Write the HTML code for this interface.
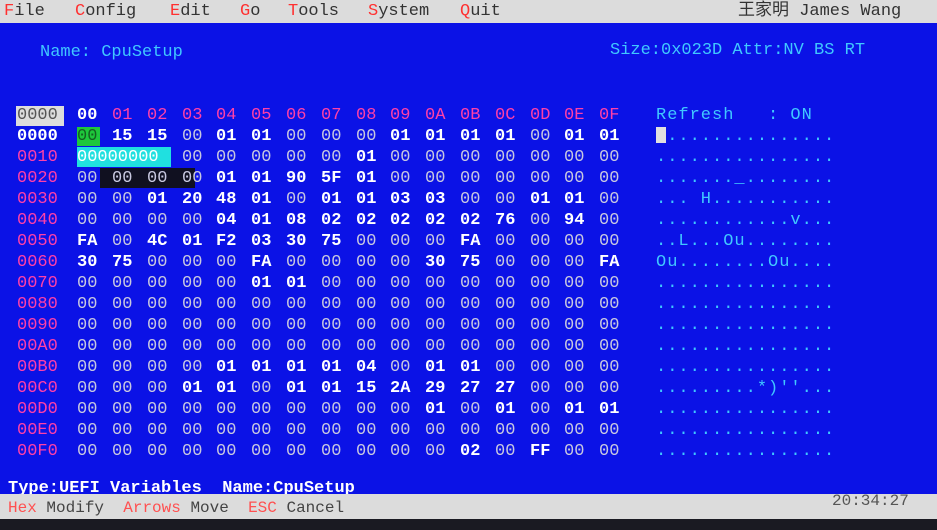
<!DOCTYPE html>
<html><head><meta charset="utf-8"><style>
body{margin:0;width:937px;height:530px;background:#1a1a22;overflow:hidden;position:relative;font-family:"Liberation Mono","DejaVu Sans Mono",monospace}
#menu{position:absolute;left:0;top:0;width:937px;height:23px;background:#dcdcdc;color:#333;font-size:17px;line-height:23px}
#menu span.r{color:#ff3030}
#blue{position:absolute;left:0;top:23px;width:937px;height:471px;background:#0b12e6}
.c{color:#40c8ff}
.row{position:absolute;left:0;height:21px;line-height:21px;font-size:17px;white-space:pre}
.row span{position:absolute;top:0}
.row span.a{letter-spacing:1px}
.w{color:#fff;font-weight:bold}
.g{color:#c8c8e0}
.m{color:#ff40a8}
.row span:nth-child(2){left:77px}.row span:nth-child(3){left:112px}.row span:nth-child(4){left:147px}.row span:nth-child(5){left:182px}.row span:nth-child(6){left:216px}.row span:nth-child(7){left:251px}.row span:nth-child(8){left:286px}.row span:nth-child(9){left:321px}.row span:nth-child(10){left:356px}.row span:nth-child(11){left:390px}.row span:nth-child(12){left:425px}.row span:nth-child(13){left:460px}.row span:nth-child(14){left:495px}.row span:nth-child(15){left:530px}.row span:nth-child(16){left:564px}.row span:nth-child(17){left:599px}
.row span:first-child{left:17px}
.row span.a{left:656px}
#bot{position:absolute;left:0;top:494px;width:937px;height:25px;background:#dcdcdc;color:#444;font-size:16px;line-height:25px;white-space:pre}
</style></head><body>
<div id="menu"><span style="position:absolute;left:4px"><span class="r">F</span>ile</span><span style="position:absolute;left:75px"><span class="r">C</span>onfig</span><span style="position:absolute;left:170px"><span class="r">E</span>dit</span><span style="position:absolute;left:240px"><span class="r">G</span>o</span><span style="position:absolute;left:288px"><span class="r">T</span>ools</span><span style="position:absolute;left:368px"><span class="r">S</span>ystem</span><span style="position:absolute;left:460px"><span class="r">Q</span>uit</span><span style="position:absolute;left:738px;font-family:'Liberation Mono','Noto Sans CJK SC',monospace">王家明 James Wang</span></div>
<div id="blue"></div>
<div class="c" style="position:absolute;font-size:17px;top:43px;left:40px">Name: CpuSetup</div>
<div class="c" style="position:absolute;font-size:17px;top:41px;left:610px">Size:0x023D Attr:NV BS RT</div>
<div style="position:absolute;left:16px;top:106px;width:48px;height:20px;background:#dcdcdc"></div>
<div style="position:absolute;left:77px;top:127px;width:23px;height:19px;background:#1ec83c"></div>
<div style="position:absolute;left:77px;top:147px;width:94px;height:20px;background:#20e0e0"></div>
<div style="position:absolute;left:100px;top:168px;width:95px;height:20px;background:#101020"></div>
<div style="position:absolute;left:656px;top:127px;width:10px;height:16px;background:#e0e0e0"></div>
<div class="row" style="top:105px"><span style="color:#555">0000</span><span class="w">00</span><span class="m">01</span><span class="m">02</span><span class="m">03</span><span class="m">04</span><span class="m">05</span><span class="m">06</span><span class="m">07</span><span class="m">08</span><span class="m">09</span><span class="m">0A</span><span class="m">0B</span><span class="m">0C</span><span class="m">0D</span><span class="m">0E</span><span class="m">0F</span><span class="c a">Refresh   : ON</span></div>
<div class="row" style="top:126px"><span class="w">0000</span><span style="color:#146020">00</span><span class="w">15</span><span class="w">15</span><span class="g">00</span><span class="w">01</span><span class="w">01</span><span class="g">00</span><span class="g">00</span><span class="g">00</span><span class="w">01</span><span class="w">01</span><span class="w">01</span><span class="w">01</span><span class="g">00</span><span class="w">01</span><span class="w">01</span><span class="c a"> ...............</span></div>
<div class="row" style="top:147px"><span class="m">0010</span><span style="color:#fff">00000000</span><span></span><span></span><span class="g">00</span><span class="g">00</span><span class="g">00</span><span class="g">00</span><span class="g">00</span><span class="w">01</span><span class="g">00</span><span class="g">00</span><span class="g">00</span><span class="g">00</span><span class="g">00</span><span class="g">00</span><span class="g">00</span><span class="c a">................</span></div>
<div class="row" style="top:168px"><span class="m">0020</span><span class="g">00</span><span class="g">00</span><span class="g">00</span><span class="g">00</span><span class="w">01</span><span class="w">01</span><span class="w">90</span><span class="w">5F</span><span class="w">01</span><span class="g">00</span><span class="g">00</span><span class="g">00</span><span class="g">00</span><span class="g">00</span><span class="g">00</span><span class="g">00</span><span class="c a">......._........</span></div>
<div class="row" style="top:189px"><span class="m">0030</span><span class="g">00</span><span class="g">00</span><span class="w">01</span><span class="w">20</span><span class="w">48</span><span class="w">01</span><span class="g">00</span><span class="w">01</span><span class="w">01</span><span class="w">03</span><span class="w">03</span><span class="g">00</span><span class="g">00</span><span class="w">01</span><span class="w">01</span><span class="g">00</span><span class="c a">... H...........</span></div>
<div class="row" style="top:210px"><span class="m">0040</span><span class="g">00</span><span class="g">00</span><span class="g">00</span><span class="g">00</span><span class="w">04</span><span class="w">01</span><span class="w">08</span><span class="w">02</span><span class="w">02</span><span class="w">02</span><span class="w">02</span><span class="w">02</span><span class="w">76</span><span class="g">00</span><span class="w">94</span><span class="g">00</span><span class="c a">............v...</span></div>
<div class="row" style="top:231px"><span class="m">0050</span><span class="w">FA</span><span class="g">00</span><span class="w">4C</span><span class="w">01</span><span class="w">F2</span><span class="w">03</span><span class="w">30</span><span class="w">75</span><span class="g">00</span><span class="g">00</span><span class="g">00</span><span class="w">FA</span><span class="g">00</span><span class="g">00</span><span class="g">00</span><span class="g">00</span><span class="c a">..L...Ou........</span></div>
<div class="row" style="top:252px"><span class="m">0060</span><span class="w">30</span><span class="w">75</span><span class="g">00</span><span class="g">00</span><span class="g">00</span><span class="w">FA</span><span class="g">00</span><span class="g">00</span><span class="g">00</span><span class="g">00</span><span class="w">30</span><span class="w">75</span><span class="g">00</span><span class="g">00</span><span class="g">00</span><span class="w">FA</span><span class="c a">Ou........Ou....</span></div>
<div class="row" style="top:273px"><span class="m">0070</span><span class="g">00</span><span class="g">00</span><span class="g">00</span><span class="g">00</span><span class="g">00</span><span class="w">01</span><span class="w">01</span><span class="g">00</span><span class="g">00</span><span class="g">00</span><span class="g">00</span><span class="g">00</span><span class="g">00</span><span class="g">00</span><span class="g">00</span><span class="g">00</span><span class="c a">................</span></div>
<div class="row" style="top:294px"><span class="m">0080</span><span class="g">00</span><span class="g">00</span><span class="g">00</span><span class="g">00</span><span class="g">00</span><span class="g">00</span><span class="g">00</span><span class="g">00</span><span class="g">00</span><span class="g">00</span><span class="g">00</span><span class="g">00</span><span class="g">00</span><span class="g">00</span><span class="g">00</span><span class="g">00</span><span class="c a">................</span></div>
<div class="row" style="top:315px"><span class="m">0090</span><span class="g">00</span><span class="g">00</span><span class="g">00</span><span class="g">00</span><span class="g">00</span><span class="g">00</span><span class="g">00</span><span class="g">00</span><span class="g">00</span><span class="g">00</span><span class="g">00</span><span class="g">00</span><span class="g">00</span><span class="g">00</span><span class="g">00</span><span class="g">00</span><span class="c a">................</span></div>
<div class="row" style="top:336px"><span class="m">00A0</span><span class="g">00</span><span class="g">00</span><span class="g">00</span><span class="g">00</span><span class="g">00</span><span class="g">00</span><span class="g">00</span><span class="g">00</span><span class="g">00</span><span class="g">00</span><span class="g">00</span><span class="g">00</span><span class="g">00</span><span class="g">00</span><span class="g">00</span><span class="g">00</span><span class="c a">................</span></div>
<div class="row" style="top:357px"><span class="m">00B0</span><span class="g">00</span><span class="g">00</span><span class="g">00</span><span class="g">00</span><span class="w">01</span><span class="w">01</span><span class="w">01</span><span class="w">01</span><span class="w">04</span><span class="g">00</span><span class="w">01</span><span class="w">01</span><span class="g">00</span><span class="g">00</span><span class="g">00</span><span class="g">00</span><span class="c a">................</span></div>
<div class="row" style="top:378px"><span class="m">00C0</span><span class="g">00</span><span class="g">00</span><span class="g">00</span><span class="w">01</span><span class="w">01</span><span class="g">00</span><span class="w">01</span><span class="w">01</span><span class="w">15</span><span class="w">2A</span><span class="w">29</span><span class="w">27</span><span class="w">27</span><span class="g">00</span><span class="g">00</span><span class="g">00</span><span class="c a">.........*)''...</span></div>
<div class="row" style="top:399px"><span class="m">00D0</span><span class="g">00</span><span class="g">00</span><span class="g">00</span><span class="g">00</span><span class="g">00</span><span class="g">00</span><span class="g">00</span><span class="g">00</span><span class="g">00</span><span class="g">00</span><span class="w">01</span><span class="g">00</span><span class="w">01</span><span class="g">00</span><span class="w">01</span><span class="w">01</span><span class="c a">................</span></div>
<div class="row" style="top:420px"><span class="m">00E0</span><span class="g">00</span><span class="g">00</span><span class="g">00</span><span class="g">00</span><span class="g">00</span><span class="g">00</span><span class="g">00</span><span class="g">00</span><span class="g">00</span><span class="g">00</span><span class="g">00</span><span class="g">00</span><span class="g">00</span><span class="g">00</span><span class="g">00</span><span class="g">00</span><span class="c a">................</span></div>
<div class="row" style="top:441px"><span class="m">00F0</span><span class="g">00</span><span class="g">00</span><span class="g">00</span><span class="g">00</span><span class="g">00</span><span class="g">00</span><span class="g">00</span><span class="g">00</span><span class="g">00</span><span class="g">00</span><span class="g">00</span><span class="w">02</span><span class="g">00</span><span class="w">FF</span><span class="g">00</span><span class="g">00</span><span class="c a">................</span></div>
<div class="w" style="position:absolute;font-size:17px;line-height:21px;top:478px;left:8px;white-space:pre">Type:UEFI Variables  Name:CpuSetup</div>
<div id="bot"><span style="position:absolute;left:8px;top:2px"><span style="color:#ff5050">Hex</span> Modify  <span style="color:#ff5050">Arrows</span> Move  <span style="color:#ff5050">ESC</span> Cancel</span><span style="position:absolute;left:832px;top:-5px;color:#555">20:34:27</span></div>
</body></html>
